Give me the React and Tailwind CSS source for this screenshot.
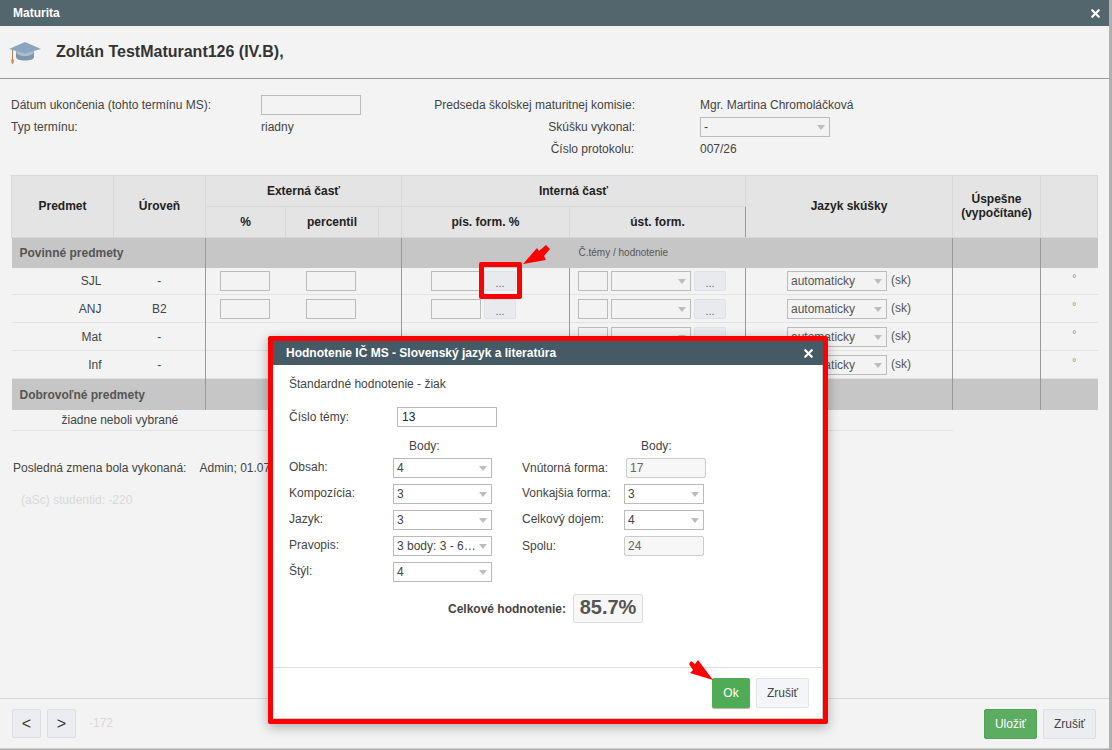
import React from "react";
import { X } from "lucide-react";

const Caret = () => (
  <span className="absolute right-[4px] top-[7px] w-0 h-0 border-l-[4px] border-r-[4px] border-t-[5px] border-l-transparent border-r-transparent border-t-[#bdbdbd]" />
);

const Sel = ({ w, v = "", cls = "" }) => (
  <div className={`relative ${w} h-[20px] border border-[#bbb] bg-transparent text-[12px] leading-[18px] pl-[3px] text-[#444] shrink-0 whitespace-nowrap ${cls}`}>
    {v}
    <Caret />
  </div>
);

const Inp = ({ w, v = "", cls = "" }) => (
  <div className={`${w} h-[20px] border border-[#bbb] text-[12px] leading-[18px] pl-[3px] shrink-0 ${cls}`}>{v}</div>
);

const Dots = () => (
  <div className="w-[32px] h-[20px] shrink-0 rounded-[2px] border border-[#dfe1e5] bg-[#e9eaee] text-center text-[11px] leading-[23px] text-[#666]">...</div>
);

const line = "border-l border-[#999]";
const th = "bg-[#e4e4e4] font-bold text-[12px] text-[#222] text-center border border-[#d8d8d8] p-0";

const Row = ({ name, lvl, ext, pis, h = "h-[28px]" }) => (
  <tr className={`${h} border-b border-[#e2e2e2] align-middle`}>
    <td className="text-right pr-[12px] p-0">{name}</td>
    <td className="text-center p-0">{lvl}</td>
    <td className={`${line} p-0`}>
      {ext && <div className="pl-[14px]"><Inp w="w-[50px]" /></div>}
    </td>
    <td className="p-0">
      {ext && <div className="pl-[20px]"><Inp w="w-[50px]" /></div>}
    </td>
    <td className="p-0" />
    <td className={`${line} p-0`}>
      {pis && (
        <div className="flex gap-[3px] pl-[29px]">
          <Inp w="w-[50px]" />
          <Dots />
        </div>
      )}
    </td>
    <td className={`${line} p-0`}>
      <div className="flex gap-[3px] pl-[8px]">
        <Inp w="w-[30px]" />
        <Sel w="w-[80px]" />
        <Dots />
      </div>
    </td>
    <td className={`${line} p-0`}>
      <div className="flex items-center gap-[4px] pl-[41px] text-[#555]">
        <Sel w="w-[100px]" v="automaticky" cls="text-[#555]" />
        <span className="-mt-[2px]">(sk)</span>
      </div>
    </td>
    <td className={`${line} p-0`} />
    <td className={`${line} p-0 pl-[10px] text-center text-[10px] text-[#888] leading-none`}>
      <span className="relative -top-[2px]">°</span>
    </td>
  </tr>
);

const Section = ({ title, sub, h, pad = "" }) => (
  <tr className={`${h} bg-[#c6c6c6]`}>
    <td colSpan={2} className={`pl-[8px] p-0 font-bold text-[#555] ${pad}`}>{title}</td>
    <td colSpan={3} className={`${line} p-0`} />
    <td className={`${line} p-0`} />
    <td colSpan={2} className="p-0 pl-[9px] text-[10px] text-[#555]">{sub}</td>
    <td className={`${line} p-0`} />
    <td className={`${line} p-0`} />
  </tr>
);

function Modal() {
  return (
    <div className="absolute left-[268px] top-[336px] w-[560px] h-[388px] border-[5px] border-[#ff0000] rounded-[2px] bg-white shadow-[0_3px_12px_rgba(0,0,0,0.3)] flex flex-col">
      <div className="h-[24px] shrink-0 bg-[#455a64] flex items-center justify-between pl-[13px] pr-[8px] text-white font-bold text-[12px]">
        <span>Hodnotenie IČ MS - Slovenský jazyk a literatúra</span>
        <X size={13} strokeWidth={4} />
      </div>
      <div className="flex-1 pl-[16px] pt-[12px] text-[#444] shadow-[inset_-1px_0_0_#ccc]">
        <div className="leading-[14px]">Štandardné hodnotenie - žiak</div>
        <div className="flex items-center mt-[16px] h-[20px]">
          <div className="w-[108px]">Číslo témy:</div>
          <Inp w="w-[100px]" v="13" cls="text-[#222] pl-[4px]" />
        </div>
        <div className="flex mt-[11px]">
          <div className="w-[233px] shrink-0">
            <div className="h-[20px] pl-[120px] leading-[16px]">Body:</div>
            {[["Obsah:", "4"], ["Kompozícia:", "3"], ["Jazyk:", "3"], ["Pravopis:", "3 body: 3 - 6…"], ["Štýl:", "4"]].map(([l, v]) => (
              <div key={l} className="flex h-[26px]">
                <div className="w-[104px] leading-[18px]">{l}</div>
                <Sel w="w-[99px]" v={v} />
              </div>
            ))}
          </div>
          <div className="shrink-0">
            <div className="h-[20px] pl-[119px] leading-[16px]">Body:</div>
            <div className="flex h-[26px]">
              <div className="w-[104px] leading-[20px]">Vnútorná forma:</div>
              <Inp w="w-[80px]" v="17" cls="bg-[#f7f7f7] rounded-[2px] text-[#666] border-[#ccc]" />
            </div>
            <div className="flex h-[26px]">
              <div className="w-[102px] leading-[19px]">Vonkajšia forma:</div>
              <Sel w="w-[80px]" v="3" />
            </div>
            <div className="flex h-[26px]">
              <div className="w-[102px] leading-[19px]">Celkový dojem:</div>
              <Sel w="w-[80px]" v="4" />
            </div>
            <div className="flex h-[26px]">
              <div className="w-[102px] leading-[21px]">Spolu:</div>
              <Inp w="w-[80px]" v="24" cls="bg-[#f7f7f7] rounded-[2px] text-[#666] border-[#ccc]" />
            </div>
          </div>
        </div>
        <div className="flex items-center mt-[6px] pl-[159px]">
          <span className="font-bold">Celkové hodnotenie:</span>
          <div className="ml-[7px] w-[70px] h-[29px] border border-[#ddd] rounded-[2px] bg-[#f7f7f7] text-center text-[20px] leading-[25px] font-bold text-[#555]">85.7%</div>
        </div>
      </div>
      <div className="h-[52px] shrink-0 border-t border-[#ddd] flex justify-end items-start gap-[6px] pt-[10px] pr-[14px] shadow-[inset_-1px_-1px_0_#ccc]">
        <div className="w-[38px] h-[30px] rounded-[2px] bg-[#4fab55] text-white text-center leading-[30px] shadow-[0_1px_1px_rgba(0,0,0,0.3)]">Ok</div>
        <div className="w-[53px] h-[30px] rounded-[2px] border border-[#e2e3e8] bg-[#f4f5f9] text-[#444] text-center leading-[28px]">Zrušiť</div>
      </div>
    </div>
  );
}

export default function App() {
  return (
    <div className="relative w-[1112px] h-[750px] overflow-hidden bg-[#b0b0b0] text-[12px] text-[#444] font-['Liberation_Sans',Arial,sans-serif]">
      <div className="w-[1109px] h-[749px] bg-[#f3f3f3] border-b border-[#ccc] flex flex-col">
        <div className="h-[26px] shrink-0 bg-[#53666e] flex items-center justify-between pl-[13px] pr-[7px] text-white font-bold">
          <span>Maturita</span>
          <X size={13} strokeWidth={4} />
        </div>
        <div className="h-[53px] shrink-0 border-b border-[#999] flex items-center pl-[9px]">
          <svg width="32" height="26" viewBox="0 0 32 26" className="shrink-0">
            <path d="M7 10v8c0 2.500 4 3.500 9 3.500s9-1 9-3.500v-8z" fill="#7f95ab" />
            <path d="M7 12c0 3 4 5 9 5s9-2 9-5v-2H7z" fill="#a9bdd0" />
            <path d="M16 3 32 10 16 14.500 0 10z" fill="#8aa5be" />
            <path d="M3.500 11v10" stroke="#b8844f" strokeWidth="1" fill="none" />
            <path d="M2 20.500h3l-.5 3-1 2-1-2z" fill="#cf8a55" />
          </svg>
          <span className="ml-[15px] text-[16px] font-bold text-[#333]">Zoltán TestMaturant126 (IV.B),</span>
        </div>

        <div className="mt-[15px] mx-[11px] grid grid-cols-[250px_374px_1fr] auto-rows-[22px] items-center">
          <div>Dátum ukončenia (tohto termínu MS):</div>
          <div className="flex items-center justify-between">
            <Inp w="w-[100px]" />
            <span>Predseda školskej maturitnej komisie:</span>
          </div>
          <div className="pl-[65px]">Mgr. Martina Chromoláčková</div>
          <div>Typ termínu:</div>
          <div className="flex justify-between">
            <span>riadny</span>
            <span>Skúšku vykonal:</span>
          </div>
          <div className="pl-[65px]"><Sel w="w-[130px]" v="-" /></div>
          <div />
          <div className="text-right pr-[1px]">Číslo protokolu:</div>
          <div className="pl-[65px]">007/26</div>
        </div>

        <div className="mt-[15px] ml-[11px]">
          <table className="w-[1086px] table-fixed border-collapse text-[12px]">
            <colgroup>
              <col className="w-[102px]" />
              <col className="w-[92px]" />
              <col className="w-[80px]" />
              <col className="w-[93px]" />
              <col className="w-[23px]" />
              <col className="w-[168px]" />
              <col className="w-[176px]" />
              <col className="w-[207px]" />
              <col className="w-[88px]" />
              <col className="w-[57px]" />
            </colgroup>
            <thead>
              <tr className="h-[31px]">
                <th rowSpan={2} className={`${th} !pb-[2px]`}>Predmet</th>
                <th rowSpan={2} className={`${th} !pb-[2px]`}>Úroveň</th>
                <th colSpan={3} className={`${th} !border-l-[#999]`}>Externá časť</th>
                <th colSpan={2} className={`${th} !border-l-[#999]`}>Interná časť</th>
                <th rowSpan={2} className={`${th} !border-l-[#999] !pb-[2px]`}>Jazyk skúšky</th>
                <th rowSpan={2} className={`${th} !border-l-[#999] leading-[14px] !pb-[2px]`}>Úspešne<br />(vypočítané)</th>
                <th rowSpan={2} className={`${th} !border-l-[#999]`} />
              </tr>
              <tr className="h-[31px]">
                <th className={`${th} !border-l-[#999]`}>%</th>
                <th className={th}>percentil</th>
                <th className={th} />
                <th className={`${th} !border-l-[#999]`}>pís. form. %</th>
                <th className={`${th} !border-l-[#999]`}>úst. form.</th>
              </tr>
            </thead>
            <tbody>
              <Section title="Povinné predmety" sub="Č.témy / hodnotenie" h="h-[30px]" />
              <Row name="SJL" lvl="-" ext pis h="h-[27px]" />
              <Row name="ANJ" lvl="B2" ext pis />
              <Row name="Mat" lvl="-" />
              <Row name="Inf" lvl="-" />
              <Section title="Dobrovoľné predmety" sub="" h="h-[31px]" pad="!pt-[2px]" />
              <tr className="h-[21px]">
                <td colSpan={8} className="p-0 pl-[50px] border-b border-[#e2e2e2]">žiadne neboli vybrané</td>
                <td className="p-0" colSpan={2} />
              </tr>
            </tbody>
          </table>
        </div>

        <div className="mt-[30px] ml-[13px] flex gap-[13px] leading-[14px]">
          <span>Posledná zmena bola vykonaná:</span>
          <span>Admin; 01.07</span>
        </div>
        <div className="mt-[18px] ml-[21px] text-[#d8d8d8] leading-[14px]">(aSc) studentid: -220</div>

        <div className="mt-auto h-[50px] shrink-0 border-t border-[#d8d8d8] flex items-start pt-[10px] pl-[12px] pr-[13px]">
          <div className="w-[29px] h-[29px] rounded-[2px] border border-[#dcdde1] bg-[#ecedf1] text-center text-[16px] leading-[27px] text-[#333]">&lt;</div>
          <div className="ml-[6px] w-[29px] h-[29px] rounded-[2px] border border-[#dcdde1] bg-[#ecedf1] text-center text-[16px] leading-[27px] text-[#333]">&gt;</div>
          <span className="ml-[13px] leading-[29px] text-[#d8d8d8]">-172</span>
          <div className="ml-auto w-[53px] h-[30px] rounded-[2px] border border-[#55a35b] bg-[#5cac62] text-white text-center leading-[28px]">Uložiť</div>
          <div className="ml-[6px] w-[53px] h-[30px] rounded-[2px] border border-[#dcdde1] bg-[#ecedf1] text-[#444] text-center leading-[28px]">Zrušiť</div>
        </div>
      </div>

      <Modal />

      <div className="absolute left-[479px] top-[262px] w-[43px] h-[37px] border-[5px] border-[#ff0000] rounded-[2px]" />
      <svg className="absolute left-0 top-0 pointer-events-none" width="1112" height="750" viewBox="0 0 1112 750">
        <polygon points="523,264 537,248 539,251 546,245 550,249 544,256 546,260" fill="#ff0000" />
        <polygon points="713,680 698,660 695,664 691,661 689,664 693,670 690,673" fill="#ff0000" />
      </svg>
    </div>
  );
}
